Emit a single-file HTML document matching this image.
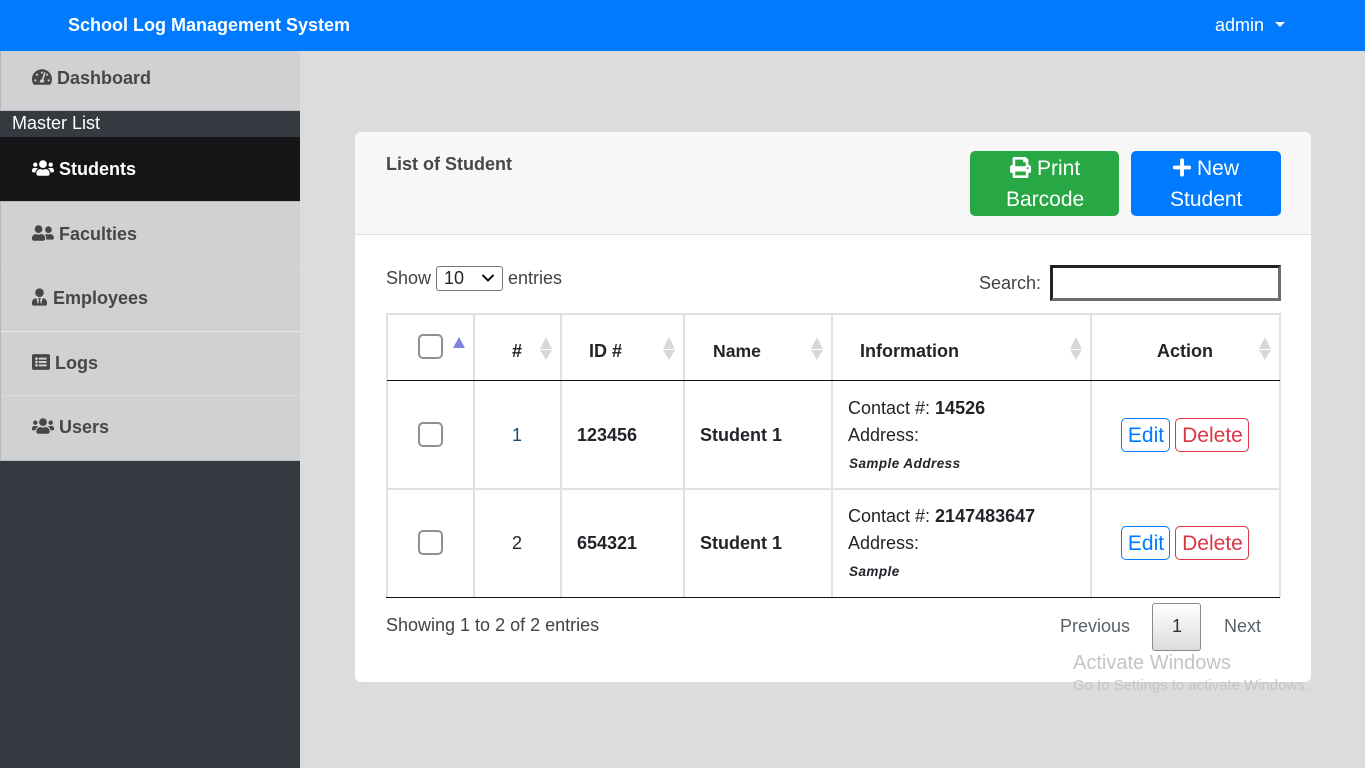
<!DOCTYPE html>
<html><head><meta charset="utf-8"><title>School Log Management System</title>
<style>
html,body{margin:0;padding:0;width:1365px;height:768px;overflow:hidden;background:#dcdcdc;font-family:"Liberation Sans",Arial,sans-serif;color:#212529;font-size:18px}
div,span,svg,a{position:absolute;box-sizing:border-box}
.t{white-space:nowrap;line-height:20px}
.b{font-weight:700}
.side{left:0;width:300px;background:#d0d1d3;border-left:1px solid #b8b9bb}
.nav{left:32px;font-weight:700;color:#494645;font-size:18px;white-space:nowrap;line-height:20px}
.ic{fill:#494645}
.v{width:2px;background:#dee2e6}
.h{height:2px;background:#dee2e6}
.k{height:1px;background:#111}
.cb{width:25px;height:25px;left:418px;border:2px solid #8f8f8f;border-radius:5px;background:#fff}
.up,.dn{width:0;height:0;border-left:6.5px solid transparent;border-right:6.5px solid transparent}
.up{border-bottom:12px solid #d8d8d8;top:337px}
.dn{border-top:10px solid #d8d8d8;top:350px}
.btn{height:34px;top:0;border:1px solid;border-radius:5px;background:#fff;text-align:center;line-height:34px;font-size:21px;white-space:nowrap;padding-left:1px}
.wh{color:#fff;font-size:21px}
</style></head><body>
<div style="left:0;top:0;width:1365px;height:51px;background:#007bff"></div>
<div class="t b" style="left:68px;top:15px;color:#fff;font-size:18px">School Log Management System</div>
<div class="t" style="left:1215px;top:15px;color:#fff;font-size:18px">admin</div>
<div style="left:1275px;top:22px;width:0;height:0;border-left:5px solid transparent;border-right:5px solid transparent;border-top:5px solid #fff"></div>

<div style="left:0;top:51px;width:300px;height:717px;background:#343a40"></div>
<div class="side" style="top:51px;height:60px;border-bottom:1px solid #b8b9bb"></div>
<svg class="ic" style="left:32px;top:68px" width="20" height="18" viewBox="0 0 576 512"><path d="M288 32C128.94 32 0 160.94 0 320c0 52.8 14.25 102.26 39.06 144.8 5.61 9.62 16.3 15.2 27.44 15.2h443c11.14 0 21.83-5.58 27.44-15.2C561.75 422.26 576 372.8 576 320c0-159.06-128.94-288-288-288zm0 64c14.71 0 26.58 10.13 30.32 23.65-1.11 2.26-2.64 4.23-3.45 6.67l-9.22 27.67c-5.13 3.49-10.97 6.01-17.64 6.01-17.67 0-32-14.33-32-32S270.33 96 288 96zM96 384c-17.67 0-32-14.33-32-32s14.33-32 32-32 32 14.33 32 32-14.33 32-32 32zm48-160c-17.67 0-32-14.33-32-32s14.33-32 32-32 32 14.33 32 32-14.33 32-32 32zm246.77-72.41l-61.33 184C343.13 347.33 352 364.54 352 384c0 11.72-3.38 22.55-8.88 32H232.88c-5.5-9.45-8.88-20.28-8.88-32 0-33.94 26.5-61.43 59.9-63.59l61.34-184.01c4.17-12.56 17.73-19.45 30.36-15.17 12.57 4.19 19.35 17.79 15.17 30.36zm14.66 57.2l15.52-46.55c3.47-1.29 7.13-2.23 11.05-2.23 17.67 0 32 14.33 32 32s-14.33 32-32 32c-11.38-.01-20.89-6.28-26.57-15.22zM480 384c-17.67 0-32-14.33-32-32s14.33-32 32-32 32 14.33 32 32-14.33 32-32 32z"/></svg>
<div class="nav" style="left:57px;top:68px">Dashboard</div>
<div class="t" style="left:12px;top:113px;color:#fff;font-size:18px">Master List</div>

<div style="left:0;top:137px;width:300px;height:64px;background:#131517"></div>
<svg fill="#fff" style="left:32px;top:159px" width="22" height="18" viewBox="0 0 640 512"><path d="M96 224c35.3 0 64-28.7 64-64s-28.7-64-64-64-64 28.7-64 64 28.7 64 64 64zm448 0c35.3 0 64-28.7 64-64s-28.7-64-64-64-64 28.7-64 64 28.7 64 64 64zm32 32h-64c-17.6 0-33.5 7.1-45.1 18.6 40.3 22.1 68.9 62 75.1 109.4h66c17.7 0 32-14.3 32-32v-32c0-35.3-28.7-64-64-64zm-256 0c61.9 0 112-50.1 112-112S381.9 32 320 32 208 82.1 208 144s50.1 112 112 112zm76.8 32h-8.3c-20.8 10-43.9 16-68.5 16s-47.6-6-68.5-16h-8.3C179.6 288 128 339.6 128 403.2V432c0 26.5 21.5 48 48 48h288c26.5 0 48-21.5 48-48v-28.8c0-63.6-51.6-115.2-115.2-115.2zm-223.7-13.4C161.5 263.1 145.6 256 128 256H64c-35.3 0-64 28.7-64 64v32c0 17.7 14.3 32 32 32h65.9c6.3-47.4 34.9-87.3 75.2-109.4z"/></svg>
<div class="nav" style="left:59px;top:159px;color:#fff">Students</div>

<div class="side" style="top:201px;height:260px;border-bottom:1px solid #b8b9bb"></div>
<div style="left:0;top:201px;width:300px;height:1px;background:#b8b9bb"></div>
<div style="left:1px;top:331px;width:299px;height:1px;background:#e8e8ea"></div>
<div style="left:1px;top:395px;width:299px;height:1px;background:#dcdddf"></div>
<div style="left:1px;top:266px;width:299px;height:1px;background:#d6d7d9"></div>

<svg class="ic" style="left:32px;top:224px" width="22" height="18" viewBox="0 0 640 512"><path d="M192 256c61.9 0 112-50.1 112-112S253.9 32 192 32 80 82.1 80 144s50.1 112 112 112zm76.8 32h-8.3c-20.8 10-43.9 16-68.5 16s-47.6-6-68.5-16h-8.3C51.6 288 0 339.6 0 403.2V432c0 26.5 21.5 48 48 48h288c26.5 0 48-21.5 48-48v-28.8c0-63.6-51.6-115.2-115.2-115.2zM480 256c53 0 96-43 96-96s-43-96-96-96-96 43-96 96 43 96 96 96zm48 32h-3.8c-13.9 4.8-28.6 8-44.2 8s-30.3-3.2-44.2-8H432c-20.4 0-39.2 5.9-55.7 15.4 24.4 26.3 39.7 61.2 39.7 99.8v38.4c0 2.2-.5 4.3-.6 6.4H592c26.5 0 48-21.5 48-48 0-61.9-50.1-112-112-112z"/></svg>
<div class="nav" style="left:59px;top:224px">Faculties</div>
<svg class="ic" style="left:32px;top:288px" width="15" height="18" viewBox="0 0 448 512"><path d="M224 256c70.7 0 128-57.3 128-128S294.7 0 224 0 96 57.3 96 128s57.3 128 128 128zm95.8 32.6L272 480l-32-136 32-56h-96l32 56-32 136-47.8-191.4C56.9 292 0 350.3 0 422.4V464c0 26.5 21.5 48 48 48h352c26.5 0 48-21.5 48-48v-41.6c0-72.1-56.9-130.4-128.2-133.8z"/></svg>
<div class="nav" style="left:53px;top:288px">Employees</div>
<svg class="ic" style="left:32px;top:353px" width="18" height="18" viewBox="0 0 512 512"><path d="M464 480H48c-26.51 0-48-21.49-48-48V80c0-26.51 21.49-48 48-48h416c26.51 0 48 21.49 48 48v352c0 26.51-21.49 48-48 48zM128 120c-22.091 0-40 17.909-40 40s17.909 40 40 40 40-17.909 40-40-17.909-40-40-40zm0 96c-22.091 0-40 17.909-40 40s17.909 40 40 40 40-17.909 40-40-17.909-40-40-40zm0 96c-22.091 0-40 17.909-40 40s17.909 40 40 40 40-17.909 40-40-17.909-40-40-40zm288-136v-32c0-6.627-5.373-12-12-12H204c-6.627 0-12 5.373-12 12v32c0 6.627 5.373 12 12 12h200c6.627 0 12-5.373 12-12zm0 96v-32c0-6.627-5.373-12-12-12H204c-6.627 0-12 5.373-12 12v32c0 6.627 5.373 12 12 12h200c6.627 0 12-5.373 12-12zm0 96v-32c0-6.627-5.373-12-12-12H204c-6.627 0-12 5.373-12 12v32c0 6.627 5.373 12 12 12h200c6.627 0 12-5.373 12-12z"/></svg>
<div class="nav" style="left:55px;top:353px">Logs</div>
<svg class="ic" style="left:32px;top:417px" width="22" height="18" viewBox="0 0 640 512"><path d="M96 224c35.3 0 64-28.7 64-64s-28.7-64-64-64-64 28.7-64 64 28.7 64 64 64zm448 0c35.3 0 64-28.7 64-64s-28.7-64-64-64-64 28.7-64 64 28.7 64 64 64zm32 32h-64c-17.6 0-33.5 7.1-45.1 18.6 40.3 22.1 68.9 62 75.1 109.4h66c17.7 0 32-14.3 32-32v-32c0-35.3-28.7-64-64-64zm-256 0c61.9 0 112-50.1 112-112S381.9 32 320 32 208 82.1 208 144s50.1 112 112 112zm76.8 32h-8.3c-20.8 10-43.9 16-68.5 16s-47.6-6-68.5-16h-8.3C179.6 288 128 339.6 128 403.2V432c0 26.5 21.5 48 48 48h288c26.5 0 48-21.5 48-48v-28.8c0-63.6-51.6-115.2-115.2-115.2zm-223.7-13.4C161.5 263.1 145.6 256 128 256H64c-35.3 0-64 28.7-64 64v32c0 17.7 14.3 32 32 32h65.9c6.3-47.4 34.9-87.3 75.2-109.4z"/></svg>
<div class="nav" style="left:59px;top:417px">Users</div>

<!-- card -->
<div style="left:355px;top:132px;width:956px;height:550px;background:#fff;border-radius:6px;overflow:hidden">
  <div style="left:0;top:0;width:956px;height:103px;background:#f7f7f7;border-bottom:1px solid #dfdfdf"></div>
</div>
<div class="t b" style="left:386px;top:154px;color:#494645;font-size:18px">List of Student</div>

<div style="left:970px;top:151px;width:149px;height:65px;background:#28a745;border-radius:5px"></div>
<svg fill="#fff" style="left:1010px;top:157px" width="21" height="21" viewBox="0 0 512 512"><path d="M448 192V77.25c0-8.49-3.37-16.62-9.37-22.63L393.37 9.37c-6-6-14.14-9.37-22.63-9.37H96C78.33 0 64 14.33 64 32v160c-35.35 0-64 28.65-64 64v112c0 8.84 7.16 16 16 16h48v96c0 17.67 14.33 32 32 32h320c17.67 0 32-14.33 32-32v-96h48c8.84 0 16-7.16 16-16V256c0-35.35-28.65-64-64-64zm-64 256H128v-96h256v96zm0-224H128V64h192v48c0 8.84 7.16 16 16 16h48v96zm48 72c-13.25 0-24-10.75-24-24 0-13.26 10.75-24 24-24s24 10.74 24 24c0 13.25-10.75 24-24 24z"/></svg>
<div class="t wh" style="left:1037px;top:159px">Print</div>
<div class="t wh" style="left:1006px;top:190px">Barcode</div>

<div style="left:1131px;top:151px;width:150px;height:65px;background:#007bff;border-radius:5px"></div>
<svg fill="#fff" style="left:1173px;top:157px" width="18" height="21" viewBox="0 0 448 512"><path d="M416 208H272V64c0-17.67-14.33-32-32-32h-32c-17.67 0-32 14.33-32 32v144H32c-17.67 0-32 14.33-32 32v32c0 17.67 14.33 32 32 32h144v144c0 17.67 14.33 32 32 32h32c17.67 0 32-14.33 32-32V304h144c17.67 0 32-14.33 32-32v-32c0-17.67-14.33-32-32-32z"/></svg>
<div class="t wh" style="left:1197px;top:159px">New</div>
<div class="t wh" style="left:1170px;top:190px">Student</div>

<div class="t" style="left:386px;top:268px;color:#3d4347">Show</div>
<div style="left:436px;top:266px;width:67px;height:25px;border:1px solid #767676;border-radius:3px;background:#fff"></div>
<div class="t" style="left:444px;top:268px">10</div>
<svg style="left:481px;top:273px" width="14" height="10" viewBox="0 0 14 10"><path d="M1.5 2 L7 7.5 L12.5 2" fill="none" stroke="#111" stroke-width="2"/></svg>
<div class="t" style="left:508px;top:268px;color:#3d4347">entries</div>

<div class="t" style="left:979px;top:273px;color:#3d4347">Search:</div>
<div style="left:1050px;top:265px;width:231px;height:36px;background:#fff;border:3px solid;border-color:#222 #6d6d6d #6d6d6d #222"></div>

<!-- table grid -->
<div class="h" style="left:386px;top:313px;width:895px"></div>
<div class="v" style="left:386px;top:313px;height:285px"></div>
<div class="v" style="left:473px;top:313px;height:285px"></div>
<div class="v" style="left:560px;top:313px;height:285px"></div>
<div class="v" style="left:683px;top:313px;height:285px"></div>
<div class="v" style="left:831px;top:313px;height:285px"></div>
<div class="v" style="left:1090px;top:313px;height:285px"></div>
<div class="v" style="left:1279px;top:313px;height:285px"></div>
<div class="h" style="left:386px;top:488px;width:895px"></div>
<div class="k" style="left:387px;top:380px;width:893px"></div>
<div class="k" style="left:386px;top:597px;width:894px"></div>

<div class="cb" style="top:334px"></div>
<div style="left:453px;top:337px;width:0;height:0;border-left:6.5px solid transparent;border-right:6.5px solid transparent;border-bottom:11px solid #8282e0"></div>
<div class="t b" style="left:512px;top:341px">#</div>
<div class="t b" style="left:589px;top:341px">ID #</div>
<div class="t b" style="left:713px;top:341px;font-size:17.6px">Name</div>
<div class="t b" style="left:860px;top:341px">Information</div>
<div class="t b" style="left:1157px;top:341px">Action</div>
<div class="up" style="left:540px"></div><div class="dn" style="left:540px"></div>
<div class="up" style="left:663px"></div><div class="dn" style="left:663px"></div>
<div class="up" style="left:811px"></div><div class="dn" style="left:811px"></div>
<div class="up" style="left:1070px"></div><div class="dn" style="left:1070px"></div>
<div class="up" style="left:1259px"></div><div class="dn" style="left:1259px"></div>

<!-- row 1 -->
<div class="cb" style="top:422px"></div>
<div class="t" style="left:512px;top:425px;color:#1a4a6a">1</div>
<div class="t b" style="left:577px;top:425px">123456</div>
<div class="t b" style="left:700px;top:425px">Student 1</div>
<div class="t" style="left:848px;top:398px">Contact #: <b>14526</b></div>
<div class="t" style="left:848px;top:425px">Address:</div>
<div class="t b" style="left:849px;top:454px;font-size:13.5px;font-style:italic;letter-spacing:.45px">Sample Address</div>
<div class="btn" style="left:1121px;top:418px;width:49px;color:#007bff;border-color:#007bff">Edit</div>
<div class="btn" style="left:1175px;top:418px;width:74px;color:#dc3545;border-color:#dc3545">Delete</div>

<!-- row 2 -->
<div class="cb" style="top:530px"></div>
<div class="t" style="left:512px;top:533px">2</div>
<div class="t b" style="left:577px;top:533px">654321</div>
<div class="t b" style="left:700px;top:533px">Student 1</div>
<div class="t" style="left:848px;top:506px">Contact #: <b>2147483647</b></div>
<div class="t" style="left:848px;top:533px">Address:</div>
<div class="t b" style="left:849px;top:562px;font-size:13.5px;font-style:italic;letter-spacing:.45px">Sample</div>
<div class="btn" style="left:1121px;top:526px;width:49px;color:#007bff;border-color:#007bff">Edit</div>
<div class="btn" style="left:1175px;top:526px;width:74px;color:#dc3545;border-color:#dc3545">Delete</div>

<div class="t" style="left:386px;top:615px;color:#3d4347">Showing 1 to 2 of 2 entries</div>
<div class="t" style="left:1060px;top:616px;color:#5a6268">Previous</div>
<div style="left:1152px;top:603px;width:49px;height:48px;border:1px solid #8a8a8a;border-radius:3px;background:linear-gradient(#fff,#dcdcdc)"></div>
<div class="t" style="left:1172px;top:616px;color:#333">1</div>
<div class="t" style="left:1224px;top:616px;color:#5a6268">Next</div>

<div class="t" style="left:1073px;top:653px;font-size:20px;color:#c4c4c4">Activate Windows</div>
<div class="t" style="left:1073px;top:676px;font-size:14.95px;color:#c4c4c4">Go to Settings to activate Windows.</div>
</body></html>
